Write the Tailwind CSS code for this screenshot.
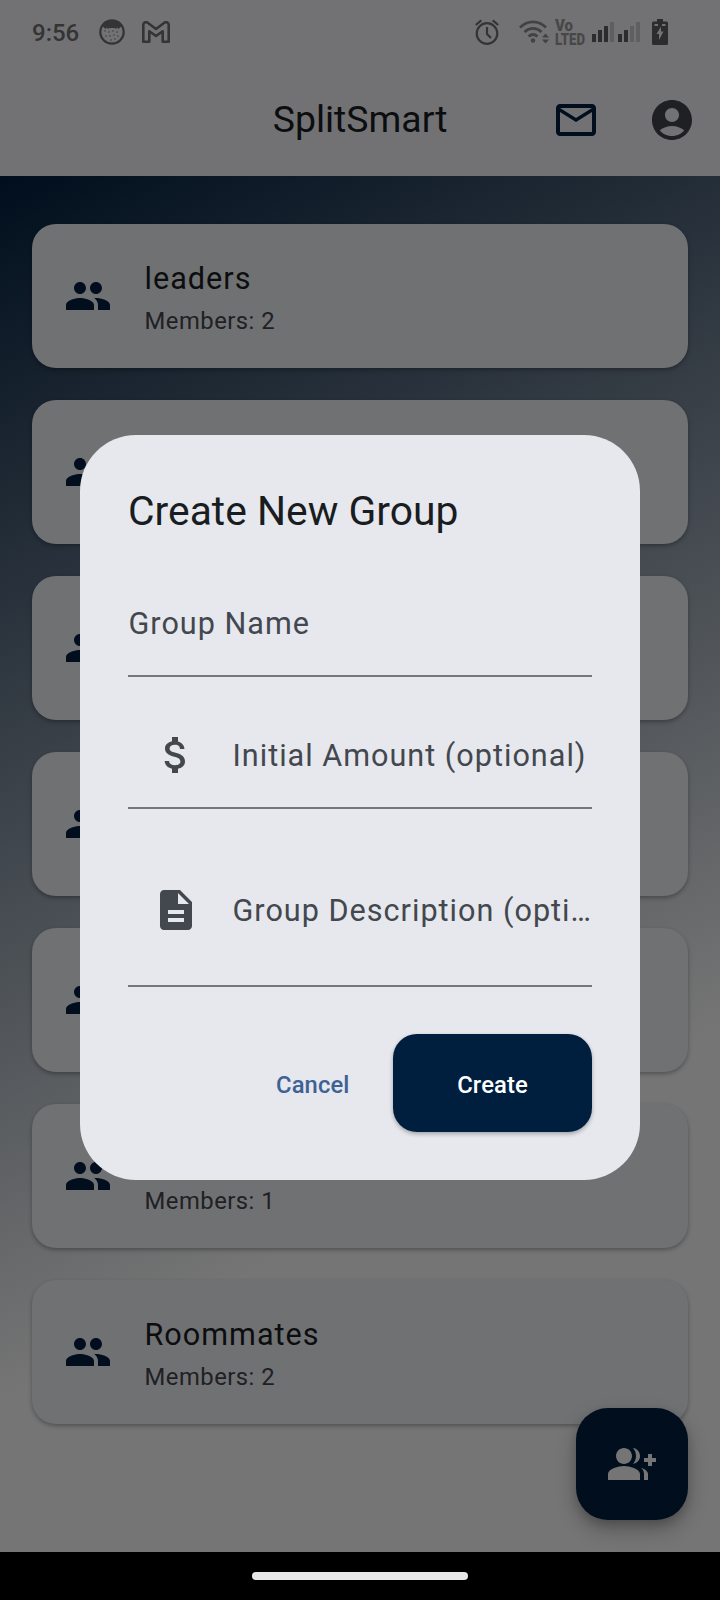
<!DOCTYPE html>
<html lang="en">
<head>
<meta charset="utf-8">
<title>SplitSmart</title>
<script src="https://cdn.jsdelivr.net/npm/@tailwindcss/browser@4"></script>
</head>
<body class="relative h-[1600px] w-[720px] overflow-hidden bg-black font-['Roboto',sans-serif]">
<svg class="hidden">
  <symbol id="people" viewBox="0 0 24 24"><path d="M16 11c1.66 0 2.99-1.34 2.99-3S17.66 5 16 5s-3 1.34-3 3 1.34 3 3 3zm-8 0c1.66 0 2.99-1.34 2.99-3S9.66 5 8 5 5 6.34 5 8s1.340 3 3 3zm0 2c-2.330 0-7 1.170-7 3.500V19h14v-2.500c0-2.330-4.670-3.500-7-3.500zm8 0c-.29 0-.62.02-.97.05 1.160.84 1.970 1.970 1.970 3.450V19h6v-2.500c0-2.330-4.670-3.500-7-3.500z"/></symbol>
</svg>

<header class="flex h-[176px] flex-col bg-[#727274]">
  <div class="flex h-16 items-center pl-8 text-[#343435]">
    <span class="w-12 pt-px text-2xl font-medium whitespace-nowrap">9:56</span>
    <svg class="ml-[19px] size-[26px]" viewBox="0 0 26 26"><circle cx="13" cy="13" r="11.700" fill="none" stroke="currentColor" stroke-width="2.200"/><path fill="currentColor" d="M3 6.500C7 .5 19 .5 23 6.500L19.500 10l-1.500-1.500-1 1.500-1.500-1h-5l-1.500 1-1-1.500-1.500 1.500z"/><g fill="currentColor"><circle cx="6" cy="12" r=".7"/><circle cx="10" cy="13" r=".7"/><circle cx="14" cy="12" r=".7"/><circle cx="18" cy="13" r=".7"/><circle cx="7" cy="17" r=".7"/><circle cx="11" cy="17" r=".7"/><circle cx="15" cy="16" r=".7"/><circle cx="19" cy="17" r=".7"/><circle cx="12" cy="21" r=".7"/><circle cx="16" cy="20" r=".7"/></g></svg>
    <svg class="ml-[17px] h-[22px] w-7" viewBox="0 0 28 22" fill="none" stroke="currentColor" stroke-width="2.600" stroke-linejoin="round"><path d="M1.300 4c0-2.500 2.600-3.700 4.400-2.200L14 8l8.300-6.200C24.100.3 26.700 1.500 26.700 4v16.700h-6V10.200L14 15 7.300 10.200v10.500h-6z"/></svg>
    <svg class="ml-[305px] h-[26px] w-6" viewBox="0 0 24 26" fill="none" stroke="currentColor" stroke-width="2.200"><circle cx="12" cy="14.500" r="10.300"/><path d="M12 8v7l4 4M.8 6 6.300 1.300M17.700 1.300 23.200 6"/></svg>
    <svg class="ml-5 h-[26px] w-[30px] text-[#424243]" viewBox="0 0 30 26"><g fill="none" stroke="currentColor" stroke-width="2.800"><path d="M1 8.500C8.500 1 19.500 1 27 8.500M5.500 13c5-4.800 12-4.800 17 0M9.500 17.500c2.800-2.500 6.200-2.500 9 0"/></g><circle cx="14" cy="21.500" r="2.200" fill="currentColor"/><path fill="currentColor" d="m26.500 14.500 3.500 4h-7zm0 10 3.500-4h-7z"/></svg>
    <svg class="ml-[6px] h-[28px] w-[31px] overflow-visible fill-[#474748] text-[16px] font-black" viewBox="0 0 31 28"><text x="0" y="12.500" textLength="18" lengthAdjust="spacingAndGlyphs">Vo</text><text x="0" y="26.500" textLength="30" lengthAdjust="spacingAndGlyphs">LTED</text></svg>
    <svg class="ml-[6px] h-5 w-12" viewBox="0 0 48 20"><path fill="#2c2c2d" d="M0 12h4v8H0zM6 8h4v12H6zM12 4h4v16h-4zM26 12h4v8h-4zM32 8h4v12h-4z"/><path fill="#5f5f61" d="M18 0h4v20h-4zM38 4h4v16h-4zM44 0h4v20h-4z"/></svg>
    <svg class="ml-3 h-[26px] w-4" viewBox="0 0 16 26"><path fill="#2c2c2d" fill-rule="evenodd" d="M5 0h6v2.500h3.500q1.500 0 1.500 1.500v20.500q0 1.500-1.500 1.500h-13Q0 26 0 24.500V4Q0 2.500 1.500 2.500H5zM2.500 5v2H6V5zM10 5v2h3.500V5zM9 7.500 4.500 15H7v6l4.500-8.500H9z"/></svg>
  </div>
  <div class="flex h-28 items-center justify-end pr-6">
    <h1 class="mr-[104.500px] text-[37.400px] leading-none text-[#0c0d0f]">SplitSmart</h1>
    <svg class="size-12" viewBox="0 0 24 24" fill="#000e1d"><path d="M22 6c0-1.100-.9-2-2-2H4c-1.100 0-2 .9-2 2v12c0 1.100.9 2 2 2h16c1.100 0 2-.9 2-2V6zm-2 0-8 5-8-5h16zm0 12H4V8l8 5 8-5v10z"/></svg>
    <svg class="ml-12 size-12" viewBox="0 0 24 24" fill="#1f2023"><path d="M12 2C6.480 2 2 6.480 2 12s4.480 10 10 10 10-4.480 10-10S17.520 2 12 2zm0 4c1.930 0 3.500 1.570 3.500 3.500S13.930 13 12 13s-3.500-1.570-3.500-3.500S10.070 6 12 6zm0 14c-2.030 0-4.430-.82-6.140-2.880C7.550 15.800 9.680 15 12 15s4.450.8 6.140 2.120C16.430 19.180 14.030 20 12 20z"/></svg>
  </div>
</header>

<main class="flex h-[1376px] flex-col gap-8 bg-[linear-gradient(152.38deg,#000e1d_0%,#757575_70%)] px-8 pt-12">
  <section class="flex h-36 shrink-0 items-center gap-[32.500px] rounded-3xl bg-[#707173] px-8 shadow-[0_2px_4px_rgba(0,0,0,0.3)]">
    <svg class="size-12 fill-[#000e1d]"><use href="#people"/></svg>
    <div class="pt-[5px]"><h2 class="text-[30.600px] leading-[44px] tracking-[1px] text-[#0c0d0f]">leaders</h2><p class="text-[23.800px] leading-10 tracking-[0.5px] text-[#1f2023]">Members: 2</p></div>
  </section>
  <section class="flex h-36 shrink-0 items-center rounded-3xl bg-[#707173] px-8 shadow-[0_2px_4px_rgba(0,0,0,0.3)]"><svg class="size-12 fill-[#000e1d]"><use href="#people"/></svg></section>
  <section class="flex h-36 shrink-0 items-center rounded-3xl bg-[#707173] px-8 shadow-[0_2px_4px_rgba(0,0,0,0.3)]"><svg class="size-12 fill-[#000e1d]"><use href="#people"/></svg></section>
  <section class="flex h-36 shrink-0 items-center rounded-3xl bg-[#707173] px-8 shadow-[0_2px_4px_rgba(0,0,0,0.3)]"><svg class="size-12 fill-[#000e1d]"><use href="#people"/></svg></section>
  <section class="flex h-36 shrink-0 items-center rounded-3xl bg-[#707173] px-8 shadow-[0_2px_4px_rgba(0,0,0,0.3)]"><svg class="size-12 fill-[#000e1d]"><use href="#people"/></svg></section>
  <section class="flex h-36 shrink-0 items-center gap-[32.500px] rounded-3xl bg-[#707173] px-8 shadow-[0_2px_4px_rgba(0,0,0,0.3)]">
    <svg class="size-12 fill-[#000e1d]"><use href="#people"/></svg>
    <p class="pt-[49px] text-[23.800px] leading-10 tracking-[0.5px] text-[#1f2023]">Members: 1</p>
  </section>
  <section class="flex h-36 shrink-0 items-center gap-[32.500px] rounded-3xl bg-[#707173] px-8 shadow-[0_2px_4px_rgba(0,0,0,0.3)]">
    <svg class="size-12 fill-[#000e1d]"><use href="#people"/></svg>
    <div class="pt-[5px]"><h2 class="text-[30.600px] leading-[44px] tracking-[1px] text-[#0c0d0f]">Roommates</h2><p class="text-[23.800px] leading-10 tracking-[0.5px] text-[#1f2023]">Members: 2</p></div>
  </section>
</main>

<button class="absolute right-8 bottom-20 flex size-28 items-center justify-center rounded-[32px] bg-[#000e1d] shadow-[0_10px_20px_rgba(0,0,0,0.25),0_4px_8px_rgba(0,0,0,0.15)]">
  <svg class="size-12" viewBox="0 0 24 24" fill="#757575"><path d="M22 9V7h-2v2h-2v2h2v2h2v-2h2V9zM8 12c2.210 0 4-1.790 4-4s-1.790-4-4-4-4 1.790-4 4 1.790 4 4 4zm0 1c-2.670 0-8 1.340-8 4v3h16v-3c0-2.660-5.330-4-8-4zm4.510-8.950C13.430 5.110 14 6.490 14 8s-.57 2.890-1.490 3.950C14.470 11.700 16 10.040 16 8s-1.530-3.700-3.490-3.950zM16.530 13.830C17.420 14.660 18 15.700 18 17v3h2v-3c0-1.450-1.590-2.510-3.470-3.170z"/></svg>
</button>

<nav class="flex h-12 items-center justify-center bg-black"><div class="h-2 w-[216px] rounded-full bg-[#e8e8e8]"></div></nav>

<div role="dialog" class="absolute top-[435.400px] left-20 flex h-[745px] w-[560px] flex-col rounded-[56px] bg-[#e6e8ed] px-12 pt-12 pb-12">
  <h2 class="h-[56px] shrink-0 text-[40.800px] leading-[56px] text-[#191c20]">Create New Group</h2>
  <div class="mt-[31.500px] flex h-[106px] shrink-0 items-center border-b-2 border-[#73777f] pt-0.5 pl-[0.5px] text-[30.600px] tracking-[1px] text-[#43474e]">Group Name</div>
  <div class="mt-[26px] flex h-[106px] shrink-0 items-center border-b-2 border-[#73777f] text-[30.600px] tracking-[1px] text-[#43474e]">
    <svg class="mr-[32.500px] ml-6 size-12 shrink-0" viewBox="0 0 24 24" fill="currentColor"><path d="M11.800 10.900c-2.270-.59-3-1.200-3-2.150 0-1.090 1.010-1.850 2.700-1.850 1.780 0 2.440.85 2.500 2.100h2.210c-.07-1.720-1.120-3.300-3.210-3.810V3h-3v2.160c-1.940.42-3.500 1.680-3.500 3.610 0 2.310 1.910 3.460 4.700 4.130 2.500.6 3 1.480 3 2.410 0 .69-.49 1.790-2.700 1.790-2.060 0-2.870-.92-2.980-2.100h-2.200c.12 2.190 1.760 3.420 3.680 3.830V21h3v-2.150c1.950-.37 3.500-1.500 3.500-3.550 0-2.840-2.430-3.810-4.700-4.400z"/></svg>
    <span class="pt-0.5 whitespace-nowrap">Initial Amount (optional)</span>
  </div>
  <div class="mt-[26px] flex h-[152px] shrink-0 items-center border-b-2 border-[#73777f] text-[30.600px] tracking-[1px] text-[#43474e]">
    <svg class="mr-[32.500px] ml-6 size-12 shrink-0" viewBox="0 0 24 24" fill="currentColor"><path d="M14 2H6c-1.100 0-1.990.9-1.990 2L4 20c0 1.100.89 2 1.990 2H18c1.100 0 2-.9 2-2V8l-6-6zm2 16H8v-2h8v2zm0-4H8v-2h8v2zm-3-5V3.500L18.500 9H13z"/></svg>
    <span class="pt-0.5 whitespace-nowrap">Group Description (opti…</span>
  </div>
  <div class="mt-[47.500px] flex h-[98px] shrink-0 items-center justify-end">
    <button class="mr-[43.500px] pt-[5px] text-[23.800px] font-medium tracking-[0.100px] text-[#3e6196]">Cancel</button>
    <button class="h-[98px] w-[199px] rounded-3xl bg-[#001f3f] pt-[5px] text-[23.800px] font-medium tracking-[0.100px] text-white shadow-[0_2px_4px_rgba(0,0,0,0.3)]">Create</button>
  </div>
</div>
</body>
</html>
